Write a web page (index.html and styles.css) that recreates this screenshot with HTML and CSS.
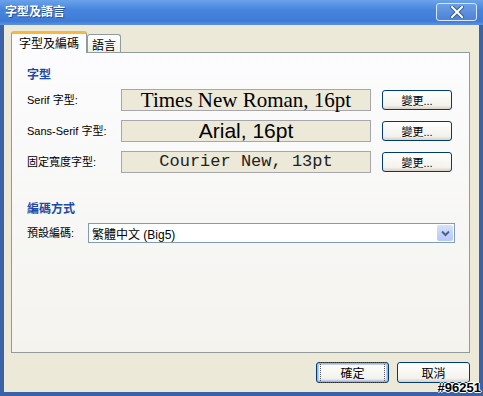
FILE: index.html
```html
<!DOCTYPE html>
<html lang="zh-Hant">
<head>
  <meta charset="UTF-8">
  <title>字型及語言</title>
  <link rel="stylesheet" href="styles.css">
</head>
<body>
  <div class="window">
    <header class="titlebar">
      <span class="title">字型及語言</span>
      <button class="close-btn" aria-label="close">
        <svg width="14" height="12" viewBox="0 0 14 12">
          <path d="M2 1 L12 11 M12 1 L2 11" stroke="#3b5a94" stroke-width="4" stroke-linecap="square"/>
          <path d="M2 1 L12 11 M12 1 L2 11" stroke="#ffffff" stroke-width="2" stroke-linecap="square"/>
        </svg>
      </button>
    </header>

    <div class="body">
      <div class="tabs">
        <div class="tab active">字型及編碼</div>
        <div class="tab">語言</div>
      </div>

      <section class="panel">
        <h2 class="heading">字型</h2>
        <div class="font-row">
          <label class="label">Serif 字型:</label>
          <div class="sample serif">Times New Roman, 16pt</div>
          <button class="btn small">變更...</button>
        </div>
        <div class="font-row">
          <label class="label">Sans-Serif 字型:</label>
          <div class="sample sans">Arial, 16pt</div>
          <button class="btn small">變更...</button>
        </div>
        <div class="font-row">
          <label class="label">固定寬度字型:</label>
          <div class="sample mono">Courier New, 13pt</div>
          <button class="btn small">變更...</button>
        </div>

        <h2 class="heading encoding">編碼方式</h2>
        <div class="enc-row">
          <label class="label short">預設編碼:</label>
          <div class="select">
            <span>繁體中文 (Big5)</span>
            <span class="arrow">
              <svg width="9" height="7" viewBox="0 0 9 7">
                <path d="M1 1.5 L4.5 5 L8 1.5" fill="none" stroke="#4d6185" stroke-width="2"/>
              </svg>
            </span>
          </div>
        </div>
      </section>

      <footer class="footer">
        <button class="btn default"><span>確定</span></button>
        <button class="btn">取消</button>
      </footer>
    </div>

    <div class="stamp">#96251</div>
  </div>
</body>
</html>
```

FILE: styles.css
```css
/* Basic styles */
body {
  margin: 0;
  padding: 0;
  font-family: "Liberation Sans", "Noto Sans CJK TC", sans-serif;
  font-size: 11px;
  color: #000;
  background: #fff;
}
.window {
  position: relative;
  width: 483px;
  height: 396px;
  box-sizing: border-box;
  background: #ece9d8;
  border: 4px solid #3b62a6;
  border-top: none;
  display: flex;
  flex-direction: column;
}
.titlebar {
  height: 25px;
  margin: 0 -4px;
  box-sizing: border-box;
  background: linear-gradient(#6aa3ea, #4685dd 40%, #3f7bd6 85%, #5c93e3);
  display: flex;
  align-items: center;
  justify-content: space-between;
  padding: 0 6px 4px 5px;
}
.title {
  color: #fff;
  font-weight: bold;
  font-size: 12px;
  text-shadow: 1px 1px 0 #2a4f9a;
}
.close-btn {
  width: 41px;
  height: 18px;
  margin-top: 2px;
  border: 1px solid #dce7f8;
  border-radius: 3px;
  background: linear-gradient(#6d9ee6, #4b83d8);
  padding: 0;
  display: flex;
  align-items: center;
  justify-content: center;
}
.body {
  flex: 1;
  display: flex;
  flex-direction: column;
  padding: 6px 9px 0 7px;
}
.tabs {
  display: flex;
  align-items: flex-end;
  height: 21px;
}
.tab {
  height: 17px;
  padding: 0 4px;
  border: 1px solid #919b9c;
  border-bottom: none;
  border-radius: 3px 3px 0 0;
  background: linear-gradient(#fff, #f0efe8);
  font-size: 12px;
  line-height: 19px;
  font-family: "Noto Sans CJK TC", sans-serif;
}
.tab.active {
  height: 19px;
  padding: 0 7px;
  background: #fcfcfe;
  border-top: 3px solid #f5b943;
  margin-bottom: -1px;
  position: relative;
  z-index: 1;
  line-height: 18px;
}
.panel {
  height: 301px;
  box-sizing: border-box;
  border: 1px solid #919b9c;
  background: linear-gradient(#fcfcfe, #f4f3ee);
  padding: 15px 14px 0 15px;
}
.heading {
  margin: 0 0 7px;
  font-size: 12px;
  font-weight: bold;
  color: #1c4aa8;
  height: 14px;
  line-height: 14px;
}
.heading.encoding {
  margin-top: 29px;
}
.font-row {
  display: flex;
  align-items: center;
  height: 22px;
  margin-bottom: 9px;
}
.label {
  width: 94px;
  flex-shrink: 0;
  margin-top: -2px;
}
.label.short {
  width: 61px;
}
.sample {
  width: 250px;
  height: 22px;
  box-sizing: border-box;
  border: 1px solid #a7a6aa;
  background: #ece9d8;
  text-align: center;
  line-height: 20px;
  color: #000;
}
.serif {
  font-family: "Liberation Serif", serif;
  font-size: 21px;
}
.sans {
  font-family: "Liberation Sans", sans-serif;
  font-size: 21px;
}
.mono {
  font-family: "Liberation Mono", monospace;
  font-size: 17px;
  color: #222;
}
.btn {
  width: 73px;
  height: 21px;
  border: 1px solid #003c74;
  border-radius: 3px;
  background: linear-gradient(#ffffff, #f3f2ec 80%, #d6d0c5);
  font-family: "Liberation Sans", "Noto Sans CJK TC", sans-serif;
  font-size: 12px;
  padding: 0;
  color: #000;
}
.btn.small {
  width: 70px;
  height: 20px;
  margin-left: 11px;
  font-size: 11px;
}
.enc-row {
  display: flex;
  align-items: center;
}
.select {
  width: 367px;
  height: 20px;
  box-sizing: border-box;
  border: 1px solid #7f9db9;
  background: #fff;
  display: flex;
  align-items: center;
  justify-content: space-between;
  padding-left: 3px;
  font-size: 12px;
}
.arrow {
  width: 16px;
  height: 16px;
  margin-right: 1px;
  border-radius: 2px;
  background: linear-gradient(#d6e2fc, #b4c8f6);
  display: flex;
  align-items: center;
  justify-content: center;
}
.footer {
  display: flex;
  justify-content: flex-end;
  gap: 8px;
  padding: 9px 0 0;
}
.btn.default {
  box-shadow: inset 0 0 0 1px #9cb6ea, inset 0 0 0 2px #bccff3;
}
.btn.default span {
  display: inline-block;
  padding: 0 18px;
  outline: 1px dotted #555;
  outline-offset: 1px;
}
.stamp {
  position: absolute;
  right: -2px;
  bottom: -3px;
  font-weight: bold;
  font-size: 13px;
  color: #000;
  text-shadow: -1px 0 #fff, 1px 0 #fff, 0 -1px #fff, 0 1px #fff;
}
```
